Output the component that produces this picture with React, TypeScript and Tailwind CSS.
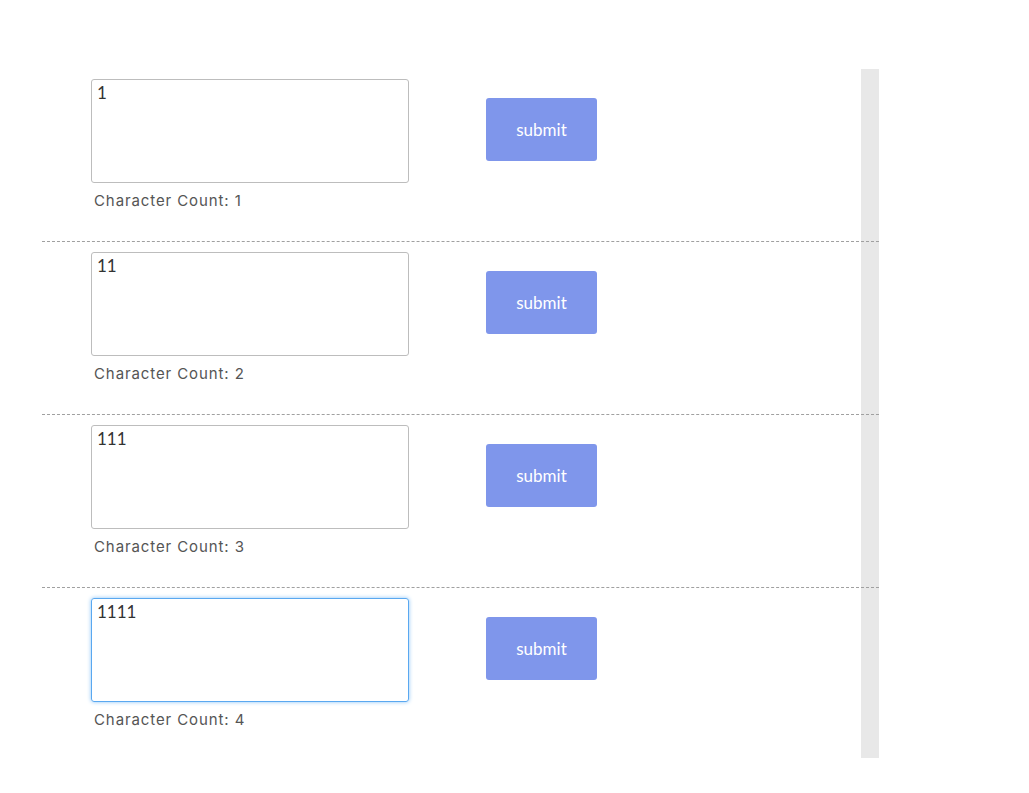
const rows = [
  { value: '1', count: 1 },
  { value: '11', count: 2 },
  { value: '111', count: 3 },
  { value: '1111', count: 4, focused: true },
];

function Row({ value, count, focused, last }: { value: string; count: number; focused?: boolean; last?: boolean }) {
  return (
    <div className={`flex h-[173px] shrink-0 pl-[49px] pt-[10px] ${last ? '' : 'border-b border-dashed border-[#a0a0a0]'}`}>
      <div className="flex flex-col">
        <textarea
          readOnly
          value={value}
          style={{ fontFamily: 'Lato, sans-serif' }}
          className={`h-[104px] w-[318px] resize-none rounded-[3px] border px-[5px] pt-[2px] text-[17px] leading-[1.3] text-[#333] outline-none ${
            focused ? 'border-[#5aa8f0] shadow-[0_0_4px_#8cc4f7]' : 'border-[#bdbdbd]'
          }`}
        />
        <p className="mt-[7px] pl-[3px] font-['Inter',sans-serif] text-[15px] tracking-[0.9px] text-[#555]">
          Character Count: {count}
        </p>
      </div>
      <button className="ml-[77px] mt-[19px] h-[63px] w-[111px] rounded-[3px] bg-[#7f96eb] font-['Lato',sans-serif] text-[17px] text-white">
        submit
      </button>
    </div>
  );
}

export default function App() {
  return (
    <div className="min-h-screen bg-white pl-[42px] pt-[69px]">
      <div className="flex h-[689px] w-[837px] flex-col overflow-hidden bg-[linear-gradient(to_left,#e8e8e8_18px,transparent_18px)]">
        {rows.map((r, i) => (
          <Row key={i} {...r} last={i === rows.length - 1} />
        ))}
      </div>
    </div>
  );
}
